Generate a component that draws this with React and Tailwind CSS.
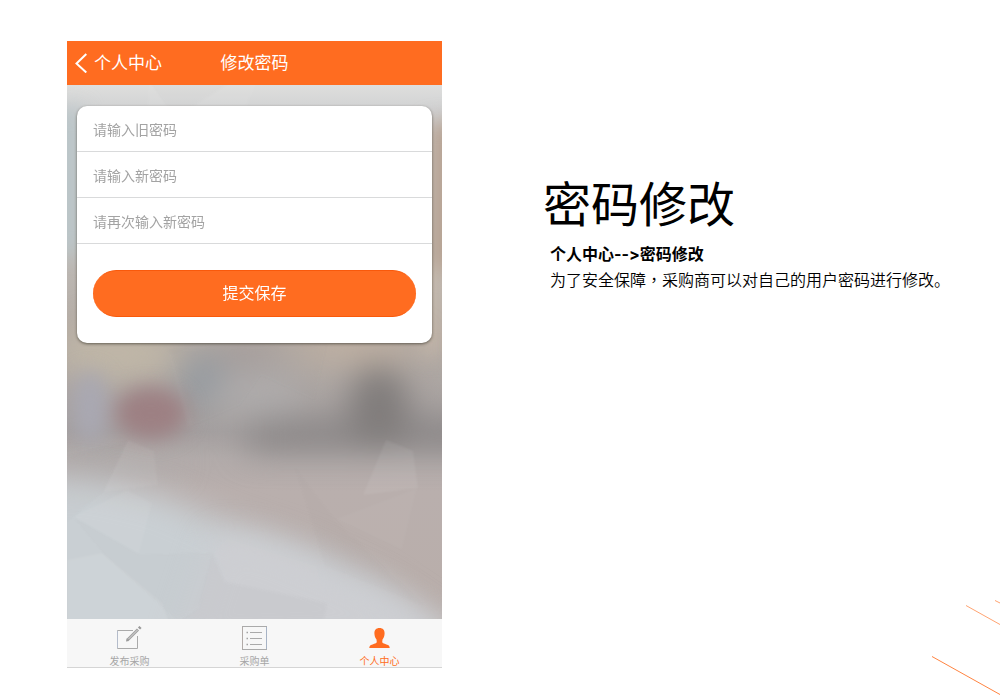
import React from 'react';

const fields = [
  { id: 'old-password', label: '请输入旧密码' },
  { id: 'new-password', label: '请输入新密码' },
  { id: 'repeat-password', label: '请再次输入新密码' },
];

function BlurredScene() {
  return (
    <svg
      className="absolute inset-0 h-full w-full"
      viewBox="0 0 375 534"
      preserveAspectRatio="none"
      aria-hidden="true"
    >
      <defs>
        <linearGradient id="base" x1="0" y1="0" x2="0" y2="1">
          <stop offset="0" stopColor="#dededd" />
          <stop offset="0.05" stopColor="#d0d1d2" />
          <stop offset="0.3" stopColor="#bfbcb8" />
          <stop offset="0.47" stopColor="#b3aaa3" />
          <stop offset="0.54" stopColor="#aea7a3" />
          <stop offset="0.65" stopColor="#a49f9f" />
          <stop offset="0.7" stopColor="#b2abaa" />
          <stop offset="0.76" stopColor="#b9afad" />
          <stop offset="1" stopColor="#b9aeaa" />
        </linearGradient>
        <filter id="soft" x="-60%" y="-60%" width="220%" height="220%" colorInterpolationFilters="sRGB">
          <feGaussianBlur stdDeviation="16" />
        </filter>
        <filter id="mid" x="-60%" y="-60%" width="220%" height="220%" colorInterpolationFilters="sRGB">
          <feGaussianBlur stdDeviation="10" />
        </filter>
        <filter id="facet" colorInterpolationFilters="sRGB">
          <feGaussianBlur stdDeviation="0.8" />
        </filter>
      </defs>
      <rect width="375" height="534" fill="url(#base)" />
      <g filter="url(#mid)">
        <rect x="-20" y="24" width="36" height="145" fill="#bac5c8" />
        <rect x="362" y="36" width="30" height="150" fill="#b7a292" />
        <rect x="357" y="180" width="14" height="90" fill="#cabbab" />
      </g>
      <g filter="url(#soft)">
        <ellipse cx="50" cy="268" rx="62" ry="30" fill="#bfb6a7" />
        <ellipse cx="290" cy="262" rx="62" ry="16" fill="#bfb0a2" />
        <ellipse cx="180" cy="270" rx="30" ry="18" fill="#a69e9c" />
        <ellipse cx="137" cy="297" rx="26" ry="28" fill="#959ba1" />
        <rect x="180" y="334" width="240" height="32" fill="#8b8787" />
        <ellipse cx="312" cy="322" rx="30" ry="42" fill="#807c7b" />
        <ellipse cx="190" cy="310" rx="46" ry="26" fill="#aeabab" />
        <ellipse cx="50" cy="378" rx="60" ry="14" fill="#b0abaa" />
      </g>
      <g filter="url(#mid)">
        <ellipse cx="23" cy="322" rx="18" ry="36" fill="#a9a8b2" />
        <ellipse cx="84" cy="328" rx="36" ry="26" fill="#9d8083" />
      </g>
      <path
        d="M-40 390 L30 395 L95 410 L160 438 L240 464 L310 498 L400 560 L-40 590Z"
        fill="#c9cfd3"
        filter="url(#soft)"
      />
      <path
        d="M150 450 L200 457 L250 478 L330 512 L400 560 L110 570Z"
        fill="#cdced2"
        filter="url(#soft)"
      />
      <g fill="#ffffff" filter="url(#facet)">
        <path d="M61 355 L87 366 L91 400 L36 407Z" opacity="0.05" />
        <path d="M319 355 L346 366 L351 403 L296 410Z" opacity="0.07" />
        <path d="M6 432 L60 405 L85 418 L72 469Z" opacity="0.06" />
        <path d="M268 434 L350 403 L335 465Z" opacity="0.03" />
        <path d="M0 475 L35 468 L95 518 L103 540 L0 540Z" opacity="0.09" />
        <path d="M145 468 L160 452 L250 480 L260 518 L169 499Z" opacity="0.02" />
        <path d="M100 262 L105 270 L183 235 L260 260 L247 315 L194 290 L173 320 L120 342Z" opacity="0.02" />
        <path d="M80 21 L82 -4 L190 -4 L180 21Z" opacity="0.05" />
      </g>
      <g fill="#74767c" filter="url(#facet)">
        <path d="M82 -4 L165 -4 L105 34 L100 21Z" opacity="0.03" />
        <path d="M6 432 L38 470 L93 520 L110 534 L134 519 L145 468 L72 470Z" opacity="0.025" />
        <path d="M145 468 L158 497 L260 518 L256 540 L114 534 L132 522Z" opacity="0.04" />
        <path d="M228 382 L258 480 L356 520 L268 434 L245 405Z" opacity="0.025" />
        <path d="M0 371 L60 356 L36 407 L0 437Z" opacity="0.02" />
        <path d="M100 265 L105 270 L127 340 L173 320 L194 290 L247 315 L260 260Z" opacity="0.02" />
      </g>
    </svg>
  );
}

function EditIcon() {
  return (
    <svg className="h-6 w-[25px]" viewBox="0 0 25 24" fill="none" aria-hidden="true">
      <path d="M16 4.5H.5V22.500H20.500V10" stroke="#aaa" />
      <path d="M.5 5V22" stroke="#b4bccb" />
      <path d="M10.500 14 21 3.500" stroke="#a0a0a0" strokeWidth="3" />
      <path d="m11.500 13 9-9" stroke="#d9d9d9" />
      <path d="m22 2.500 1.500-1.500" stroke="#999" strokeWidth="3" />
      <path d="m9 15.500 .6-3 2.400 2.400Z" fill="#999" />
    </svg>
  );
}

function ListIcon() {
  return (
    <svg className="h-6 w-[25px]" viewBox="0 0 25 24" fill="none" aria-hidden="true">
      <path d="M0 .5H25M0 23.500H25" stroke="#aaa" />
      <path d="M.5 1V23" stroke="#b1aaa7" />
      <path d="M24.500 1V23" stroke="#a7b3c5" />
      <path d="M8 6.500H20M8 12.500H20M8 18.500H20" stroke="#aaa" />
      <path d="M4.500 6.500H6M4.500 12.500H6M4.500 18.500H6" stroke="#a2a2a2" strokeWidth="1.500" />
    </svg>
  );
}

function PersonIcon() {
  return (
    <svg className="h-6 w-[25px]" viewBox="0 0 25 24" fill="#ff6c20" aria-hidden="true">
      <path d="M12.500 2C16 2 17.700 4.200 17.600 7.500C17.500 10 16.700 12 15.500 13.500L15.200 16.200C16 17.600 19.200 18.100 21 19C22.200 19.600 22.600 20.600 22.700 22H2.300C2.400 20.600 2.800 19.600 4 19C5.800 18.100 9 17.600 9.800 16.200L9.500 13.500C8.300 12 7.500 10 7.400 7.500C7.300 4.200 9 2 12.500 2Z" />
    </svg>
  );
}

const tabs = [
  { label: '发布采购', Icon: EditIcon },
  { label: '采购单', Icon: ListIcon },
  { label: '个人中心', Icon: PersonIcon, active: true },
];

function Phone() {
  return (
    <section className="w-full max-w-[375px]">
      <header className="grid h-11 grid-cols-[1fr_auto_1fr] items-center bg-[#ff6c20] px-2 text-[17px] leading-6 text-white">
        <a href="#account" className="flex items-center gap-[7px]">
          <svg className="h-5 w-3" viewBox="0 0 12 20" fill="none" stroke="currentColor" strokeWidth="2" aria-hidden="true">
            <path d="M11.300 1 1.500 10.500 11.300 19.500" />
          </svg>
          <span className="pb-[3px]">个人中心</span>
        </a>
        <h1 className="pb-[3px]">修改密码</h1>
      </header>

      <div className="relative min-h-[534px] px-2.5 pt-[21px]">
        <BlurredScene />
        <form className="relative overflow-hidden rounded-[10px] bg-white shadow-[0_1px_3px_rgba(70,65,55,0.75)]">
          {fields.map((field) => (
            <div key={field.id} className="border-b border-[#d9dadb]">
              <input
                id={field.id}
                type="password"
                aria-label={field.label}
                placeholder={field.label}
                className="block h-[45px] w-full px-4 text-sm text-gray-700 outline-none placeholder:text-[#a3a3a3]"
              />
            </div>
          ))}
          <div className="px-4 py-[26px]">
            <button
              type="button"
              className="block h-[47px] w-full rounded-full border-y border-[#f9590b] bg-[#ff6c20] pb-1 text-base text-white"
            >
              提交保存
            </button>
          </div>
        </form>
      </div>

      <nav className="grid grid-cols-3 border-b border-[#d5d5d5] bg-[#f7f7f7] pt-[7px]">
        {tabs.map(({ label, Icon, active }) => (
          <a
            key={label}
            href={'#' + label}
            className={
              active
                ? 'flex flex-col items-center gap-1 text-[10px] leading-[13px] text-[#ff6c20]'
                : 'flex flex-col items-center gap-1 text-[10px] leading-[13px] text-[#a6a6a6]'
            }
          >
            <Icon />
            <span>{label}</span>
          </a>
        ))}
      </nav>
    </section>
  );
}

export default function App() {
  return (
    <main className="relative flex min-h-screen items-start overflow-hidden bg-white pl-[67px] pt-[41px] font-['Noto_Sans_CJK_SC',sans-serif]">
      <Phone />
      <section className="min-w-0 flex-1 shrink-0 basis-[440px] pl-[101px] pt-[130px] text-black">
        <h2 className="text-5xl leading-[60px] font-normal">密码修改</h2>
        <div className="pl-[7px] pt-2.5 text-base leading-[25px]">
          <p className="font-bold">
            个人中心
            <span className="font-[Inter,sans-serif] [font-feature-settings:'calt'_0]">--&gt;</span>
            密码修改
          </p>
          <p className="font-[350]">
            为了安全保障<span className="font-['Noto_Sans_CJK_TC',sans-serif]">，</span>采购商可以对自己的用户密码进行修改。
          </p>
        </div>
      </section>
      <svg
        className="absolute bottom-0 right-0 h-[100px] w-[68px]"
        viewBox="0 0 68 100"
        fill="none"
        stroke="#ff8441"
        aria-hidden="true"
      >
        <path d="M0 56.500 68 94.500" />
        <path d="M34 5.500 68 24.500" opacity="0.75" />
        <path d="M63 .5 68 3" opacity="0.75" />
      </svg>
    </main>
  );
}
